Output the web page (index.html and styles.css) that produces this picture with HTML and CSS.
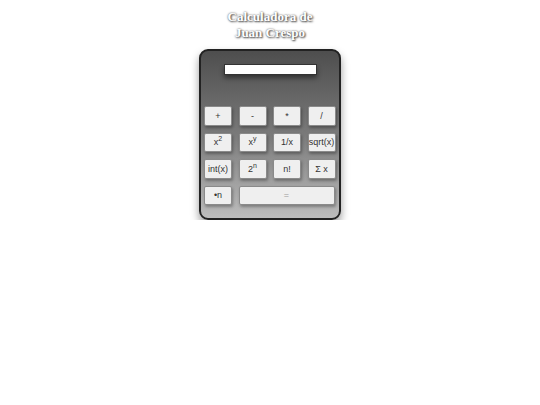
FILE: index.html
```html
<!DOCTYPE html>
<html lang="es">
<head>
  <meta charset="UTF-8">
  <title>Calculadora de Juan Crespo</title>
  <link rel="stylesheet" href="styles.css">
</head>
<body>

  <h1 class="title">Calculadora de<br>Juan Crespo</h1>

  <div class="calc">
    <input class="display" type="text" id="display" value="">

    <div class="keys">
      <button class="key">+</button>
      <button class="key">-</button>
      <button class="key">*</button>
      <button class="key">/</button>

      <button class="key">x<sup>2</sup></button>
      <button class="key">x<sup>y</sup></button>
      <button class="key">1/x</button>
      <button class="key">sqrt(x)</button>

      <button class="key">int(x)</button>
      <button class="key">2<sup>n</sup></button>
      <button class="key">n!</button>
      <button class="key">&Sigma; x</button>

      <button class="key">&bull;n</button>
      <button class="key equal">=</button>
    </div>
  </div>

</body>
</html>
```

FILE: styles.css
```css
body {
  margin: 8px;
  background: #fff;
  font-family: 'Liberation Sans', Arial, sans-serif;
}

.title {
  margin: 1px 0 8px 0;
  font-family: 'Liberation Serif', 'Times New Roman', serif;
  font-size: 13px;
  line-height: 16px;
  font-weight: bold;
  text-align: center;
  color: #fff;
  text-shadow: 0 0 2px #555, 1px 1px 2px #444;
}

.calc {
  width: 138px;
  height: 167px;
  margin: 0 auto;
  border: 2px solid #222;
  border-radius: 9px;
  background: linear-gradient(#4e4e4e, #7a7a7a 50%, #bdbdbd);
  box-shadow: 0 5px 8px rgba(0, 0, 0, 0.4);
  box-sizing: content-box;
  display: flex;
  flex-direction: column;
  align-items: flex-start;
}

.display {
  width: 93px;
  height: 11px;
  margin: 13px 0 0 23px;
  padding: 0;
  border: 1px solid #333;
  background: #fff;
  box-shadow: 0 3px 5px rgba(0, 0, 0, 0.45);
  box-sizing: border-box;
}

.keys {
  display: grid;
  grid-template-columns: repeat(4, 28px);
  grid-auto-rows: 19.5px;
  column-gap: 6.5px;
  row-gap: 7px;
  margin: 31px 0 0 3px;
}

.key {
  margin: 0;
  padding: 0;
  border: 1px solid #8a8a8a;
  border-radius: 2px;
  background: #efefef;
  color: #333;
  font-family: 'Liberation Sans', Arial, sans-serif;
  font-size: 9px;
  box-shadow: 1px 2px 3px rgba(0, 0, 0, 0.3);
  white-space: nowrap;
}

.key sup {
  font-size: 7px;
  line-height: 0;
}

.equal {
  grid-column: span 3;
  width: 96px;
  color: #999;
}
```
